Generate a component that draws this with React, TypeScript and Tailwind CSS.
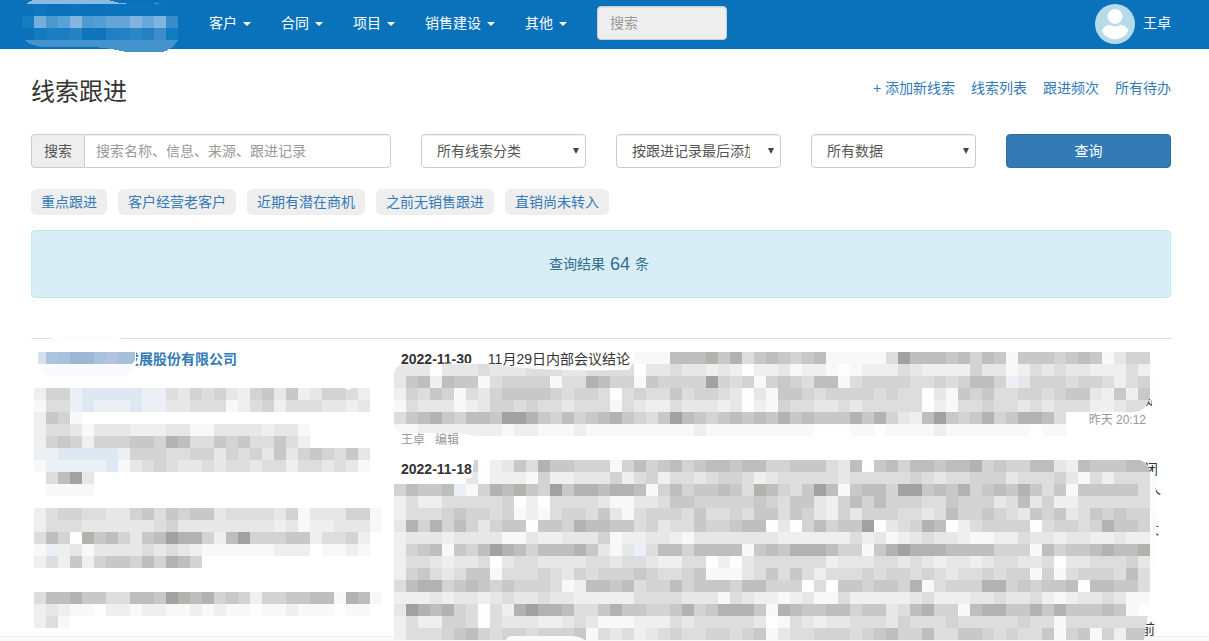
import { useState } from 'react';

const NAV_ITEMS = ['客户', '合同', '项目', '销售建设', '其他'];

const PAGE_LINKS = ['+ 添加新线索', '线索列表', '跟进频次', '所有待办'];

const FILTERS = [
  { id: 'category', label: '线索分类', options: ['所有线索分类', '重点线索'] },
  { id: 'order', label: '排序', options: ['按跟进记录最后添加时间', '按线索创建时间'] },
  { id: 'scope', label: '数据范围', options: ['所有数据', '我的数据'] },
];

const TAGS = ['重点跟进', '客户经营老客户', '近期有潜在商机', '之前无销售跟进', '直销尚未转入'];

// One character per mosaic cell, '.' leaves the cell empty
const CELL = 12;
const SHADES: Record<string, string> = {
  '0': '#fefefe',
  '1': '#f8f8f8',
  '2': '#efefef',
  '3': '#e6e7e6',
  '4': '#dddddd',
  '5': '#d3d3d4',
  '6': '#c8c8c8',
  '7': '#bebebf',
  '8': '#b2b2b1',
  '9': '#a1a1a2',
  b: '#dee8f2',
  c: '#ebf0f7',
};

const LEAD_MASK = [
  '',
  '',
  '',
  '255cbbbbbcc43545325636235542',
  '144cbcccbcc33444124524443323',
  '2651',
  '24431333222331133332331',
  '25652555665874465644642',
  'ccbbbbbc55544553545363565463',
  '1cccccb134543343443442443431',
  '.4793',
  '.1111',
  '',
  '24554433564656634444351333551',
  '24443333334533333333231223331',
  '4750867536798852795556624452',
  '1c231333343432111111222.1121',
  '24262566575875',
  '',
  '',
  '47786644776987856525566771871',
  '2321102212211212110112111011',
  '241',
];

const RECORD_MASK = [
  '....................1117778684676567111114977767576166656761355',
  '333033343334443344440334332320223122101222432222533124343322242',
  '36727661455551448755165555954515654771455554454577' + '5c35554554245',
  '25465143566665455404544645543031665455554544031656' + '4455456632626',
  '14333123554544344414322433323021544334344444021445' + '4434344422344',
  '46786577699865756786546976567676867666868532796568' + '568874',
  '11222222212211121111111112111111111000110111121111' + '111011',
  '',
  '',
  '......50236486655515756756776775566643706757767785' + '6557732766677',
  '......30222152233352452443455423444443444445434455' + '5344453142444',
  '57667c15878659688788715756676487546971677599676856' + '7686461666664',
  '24224444450204444311334665555565466325757555446555' + '3473522444444',
  '24445655451214554631455546445466465325355544347556' + '5436563465655',
  '38585753566066587766453446556770305756690345870245' + '5550455458665',
  '23332333311322333512233213333333222222423123433211' + '2243323322322',
  '25671657987577786313c47757777167688875516898887777' + '5551756678778',
  '24432334034433334434432244020344444423334434323323' + '4433403344453',
  '25643466144454354555654456111346464244454554543445' + '4551514555474',
  '47885676565554127767455756665775550406656658145558' + '8565667077664',
  '22232332343343322222444433314322123114222223422233' + '4334212334311',
  '39878540428988744686655685688861876677566347855178' + '8668686667610',
  '24225540433322343111222434444430143233444354445444' + '4454414444444',
  '24445675455455561434234544554561344555456755744665' + '4544615615266',
];

const BRAND_CELLS = [
  ['#0872bb', '#0d75bd', '#0972bb', '#0972bb', '#0b74bd', '#0972bb', '#0972bb', '#0b74bd', '#0b74bd', '#0b74bd', '#0b74bd', '#0b74bd', '#0972bb'],
  ['#177bc0', '#74afdb', '#4b98d0', '#57a2d7', '#84b6df', '#4c9ad1', '#529fd4', '#64a4d7', '#64a5d8', '#81b5df', '#66a9dc', '#80b5de', '#388cc9'],
  ['#0972bb', '#137ac1', '#1b7ec3', '#1a7cc1', '#2482c5', '#0e75bd', '#0e75bd', '#1f80c4', '#2382c5', '#2a87c8', '#2381c4', '#3b8ecb', '#127ac0'],
];

const COMPANY_CELLS = ['#aac5e0', '#a8c2dc', '#9ab7d4', '#9bb8d5', '#a9c3de', '#b0c4df', '#a5c0db'];

function Mosaic({ rows }: { rows: string[] }) {
  return (
    <>
      {rows.map((row, y) =>
        row.split('').map((cell, x) =>
          cell === '.' ? null : (
            <rect key={`${x}-${y}`} x={x * CELL} y={y * CELL} width={CELL} height={CELL} fill={SHADES[cell]} />
          )
        )
      )}
    </>
  );
}

function BrandMark() {
  return (
    <svg className="absolute top-0 -left-[9px]" width="156" height="52" viewBox="0 0 156 52" shapeRendering="crispEdges" aria-hidden="true">
      <path d="M4 4Q8 1 11 0H86Q96 3 108 4Z" fill="#8abbe0" />
      <path d="M131 4Q135 2 138 4Z" fill="#4a97d0" />
      {BRAND_CELLS.map((row, y) =>
        row.map((fill, x) => (
          <rect key={`${x}-${y}`} x={x * CELL} y={4 + y * CELL} width={CELL} height={CELL} fill={fill} />
        ))
      )}
      <path d="M2 40H156Q150 50 140 52H104Q88 48 72 47H24Q10 47 2 40Z" fill="#4593cc" />
    </svg>
  );
}

function Avatar() {
  return (
    <svg width="40" height="40" viewBox="0 0 40 40" aria-hidden="true">
      <circle cx="20" cy="20" r="20" fill="#b5dce6" />
      <circle cx="20" cy="12.500" r="7.500" fill="#fff" />
      <path d="M6.500 26.500C9 22.500 13 20.500 15 20.800C18 22.800 22 22.800 25 20.800C28 20.500 31.500 22.800 33.500 26.500C30.500 32.500 25.500 35.200 20 35.200S9.500 32.500 6.500 26.500Z" fill="#fff" />
    </svg>
  );
}

function Header() {
  return (
    <header className="bg-[#0972ba] pr-[7px] text-white">
      <div className="mx-auto flex h-[49px] max-w-[1170px] items-center px-[15px] pb-px">
        <a href="#" aria-label="首页" className="relative h-full w-[163px] shrink-0">
          <BrandMark />
        </a>
        <nav className="flex shrink-0">
          {NAV_ITEMS.map((item) => (
            <button key={item} type="button" className="flex items-center gap-1.5 px-[15px] pb-0.5">
              {item}
              <span className="mt-0.5 border-x-4 border-t-4 border-x-transparent border-t-white" />
            </button>
          ))}
        </nav>
        <input
          type="search"
          aria-label="全站搜索"
          placeholder="搜索"
          className="mb-0.5 ml-[15px] h-[34px] w-[130px] rounded border border-[#ccc] bg-[#eee] px-3 text-[#555] inset-shadow-2xs placeholder:text-[#999]"
        />
        <a href="#" className="ml-auto flex shrink-0 items-center gap-2">
          <Avatar />
          <span className="pb-0.5">王卓</span>
        </a>
      </div>
    </header>
  );
}

function SearchForm() {
  const [keyword, setKeyword] = useState('');

  return (
    <form className="mt-7 grid grid-cols-12 gap-[30px]" onSubmit={(e) => e.preventDefault()}>
      <div className="col-span-4 flex h-[34px]">
        <label htmlFor="keyword" className="flex items-center rounded-l border border-r-0 border-[#ccc] bg-[#eee] px-3 text-[#555]">
          搜索
        </label>
        <input
          id="keyword"
          value={keyword}
          onChange={(e) => setKeyword(e.target.value)}
          placeholder="搜索名称、信息、来源、跟进记录"
          className="min-w-0 flex-1 rounded-r border border-[#ccc] px-[11px] text-[#555] inset-shadow-2xs placeholder:text-[#999]"
        />
      </div>
      {FILTERS.map((filter) => (
        <div key={filter.id} className="relative col-span-2">
          <select
            aria-label={filter.label}
            className="h-[34px] w-full appearance-none rounded border border-[#ccc] bg-white pr-[30px] pl-[15px] text-[#555] inset-shadow-2xs"
          >
            {filter.options.map((option) => (
              <option key={option}>{option}</option>
            ))}
          </select>
          <svg className="pointer-events-none absolute top-3.5 right-[7px]" width="6" height="6" viewBox="0 0 6 6" aria-hidden="true">
            <path d="M0 0H6L3 6Z" fill="#444" />
          </svg>
        </div>
      ))}
      <button type="submit" className="col-span-2 h-[34px] rounded border border-[#2e6da4] bg-[#337ab7] text-white">
        查询
      </button>
    </form>
  );
}

function Lead() {
  return (
    <div className="relative pt-2.5">
      <a href="#" className="block pl-[94px] font-bold text-[#337ab7]">
        发展股份有限公司
      </a>
      <svg className="absolute -top-1 left-[3px]" width="348" height="301" viewBox="0 -17 348 301" shapeRendering="crispEdges" aria-hidden="true">
        <path d="M14 -13Q35 -18 60 -17Q80 -17 88 -13V-12H14Z" fill="#fdfdfd" />
        <path d="M4 0H102V12Q98 22 92 24H12Q4 16 4 0Z" fill="#f8fafd" />
        <rect x="4" width="8" height="12" fill="#d7e0ed" />
        {COMPANY_CELLS.map((fill, i) => (
          <rect key={i} x={12 + i * CELL} width={CELL} height="12" fill={fill} />
        ))}
        <path d="M96 0H101V8L98 12H96Z" fill="#a5c0db" />
        <Mosaic rows={LEAD_MASK} />
        <path d="M310 36H318L315 38Z" fill="#fff" />
      </svg>
    </div>
  );
}

function Records() {
  return (
    <div className="relative pt-2.5 pl-2.5">
      <article>
        <div className="flex h-10 gap-4">
          <time className="font-bold">2022-11-30</time>
          <span>11月29日内部会议结论</span>
        </div>
        <p className="pr-3 text-right">是</p>
        <div className="pt-px pr-[25px] text-right text-xs leading-5 text-[#999]">昨天 20:12</div>
        <div className="flex gap-2.5 text-xs leading-5 text-[#999]">
          <span>王卓</span>
          <a href="#">编辑</a>
        </div>
      </article>
      <article className="mt-[9px]">
        <div className="flex justify-between pr-[13px]">
          <time className="font-bold">2022-11-18</time>
          <span>闭</span>
        </div>
        <p className="h-10 pr-2.5 text-right">人</p>
        <p className="h-[100px] pr-3 text-right">大</p>
        <p className="h-4 pr-4 text-right">前</p>
      </article>
      <svg className="absolute top-[13px] left-[3px]" width="768" height="288" viewBox="0 0 768 288" aria-hidden="true">
        <defs>
          <clipPath id="record-outline">
            <path d="M241 0H756V42Q754 60 738 60H672V84H80L66 81H14Q0 82 0 72V22Q0 12 14 12H45Q75 10 100 12Q140 20 235 18Q240 10 241 0ZM80 108H746Q756 112 756 122V250L750 288H0V130Q16 123 40 127Q60 128 78 126Z" />
          </clipPath>
        </defs>
        <path d="M756 24H768V56H758V48H756Z" fill="#fefefe" />
        <path d="M756 120H761Q764 180 761 216H756Z" fill="#fbfbfc" />
        <g clipPath="url(#record-outline)">
          <rect width="756" height="84" fill="#f7f7f7" />
          <g shapeRendering="crispEdges">
            <Mosaic rows={RECORD_MASK} />
          </g>
        </g>
        <path d="M112 288Q113 284 118 284H176Q186 284 191 288Z" fill="#fafafa" />
      </svg>
    </div>
  );
}

export default function App() {
  return (
    <div className="flex min-h-screen flex-col bg-white font-['Liberation_Sans','Noto_Sans_CJK_SC',sans-serif] text-sm leading-5 text-[#333]">
      <Header />
      <main className="flex-1 pr-[7px]">
        <div className="mx-auto max-w-[1170px] px-[15px]">
          <div className="flex items-start justify-between pt-[29px]">
            <h1 className="text-2xl leading-7">线索跟进</h1>
            <div className="flex gap-4">
              {PAGE_LINKS.map((link) => (
                <a key={link} href="#" className="text-[#337ab7]">
                  {link}
                </a>
              ))}
            </div>
          </div>

          <SearchForm />

          <div className="mt-[21px] flex flex-wrap gap-[11px]">
            {TAGS.map((tag) => (
              <button key={tag} type="button" className="h-[26px] rounded-md bg-[#eee] px-2.5 text-[#337ab7]">
                {tag}
              </button>
            ))}
          </div>

          <div className="mt-[15px] flex h-[68px] items-center justify-center gap-[5px] rounded border border-[#bce8f1] bg-[#d9edf7] pr-1 text-[#31708f]">
            <span>查询结果</span>
            <span className="text-lg leading-5">64</span>
            <span>条</span>
          </div>

          <section className="mt-10 grid grid-cols-[6fr_13fr] border-t border-[#ddd]">
            <Lead />
            <Records />
          </section>
        </div>
      </main>
      <footer className="h-[5px] border-t border-[#eee] bg-[#fafafa]" />
    </div>
  );
}
